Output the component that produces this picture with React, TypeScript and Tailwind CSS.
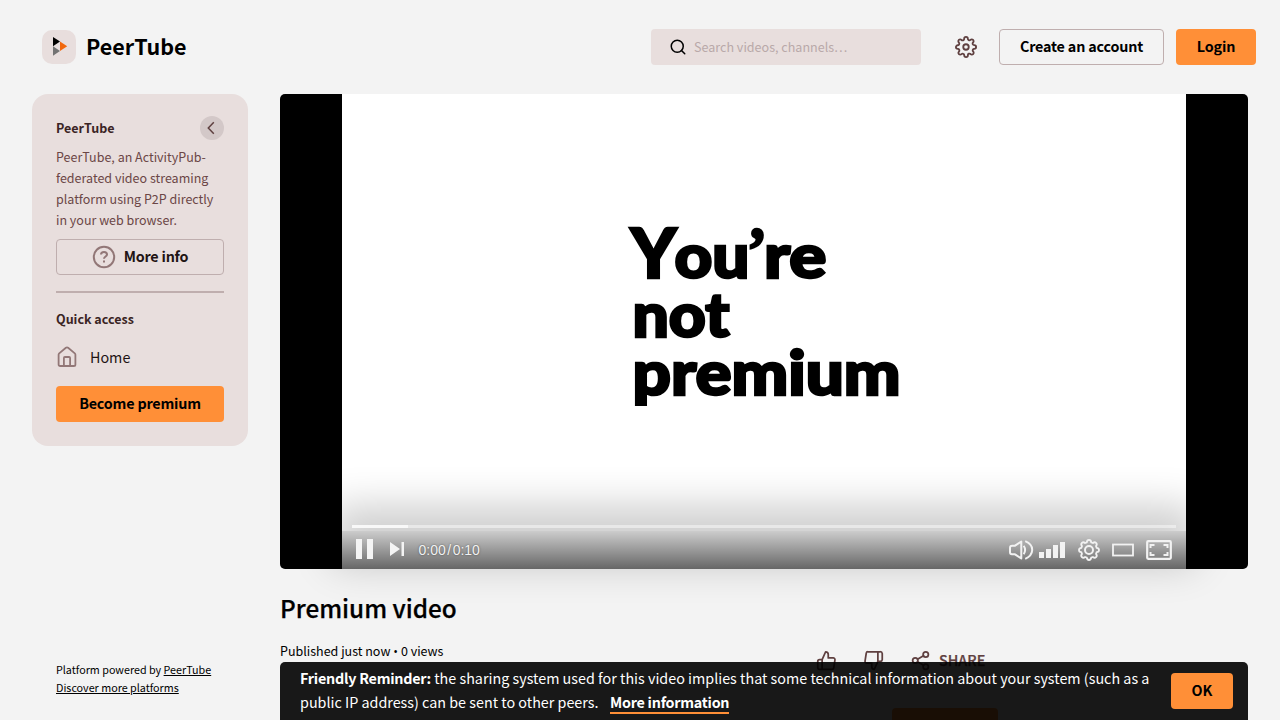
import React from "react";
import { FiSearch, FiSettings, FiShare2, FiThumbsDown, FiThumbsUp } from "react-icons/fi";

function Logo() {
  return (
    <span className="flex h-[34px] w-[34px] items-center justify-center rounded-[10px] bg-[#e8dedd]">
      <svg width="34" height="34" viewBox="0 0 34 34">
        <path d="M11 7v9.2l7-4.6z" fill="#000" />
        <path d="M11 16.2v9.6l7-4.9z" fill="#737373" />
        <path d="M18 11.6v9.4l7.2-4.7z" fill="#f1680d" />
      </svg>
    </span>
  );
}

function Header() {
  return (
    <header className="flex h-[94px] items-center pr-6 pl-[42px]">
      <Logo />
      <span className="ml-[10px] pb-[2px] text-[21.5px] leading-8 font-bold">PeerTube</span>
      <div className="ml-auto flex h-9 w-[270px] items-center rounded bg-[#e8dedd] pl-[18px]">
        <FiSearch size={18} strokeWidth={2} />
        <span className="ml-[7px] text-[12.55px] leading-5 text-[#b9a9a9]">Search videos, channels…</span>
      </div>
      <FiSettings className="ml-[34px] text-[#5f4040]" size={22} />
      <button className="ml-[22px] h-9 w-[165px] rounded border border-[#bfaeae] pb-[2px] text-[14.33px] font-bold tracking-[-0.17px]">
        Create an account
      </button>
      <button className="ml-3 h-9 w-20 rounded bg-[#ff8f37] pb-[2px] text-[14.33px] font-bold tracking-[-0.17px]">Login</button>
    </header>
  );
}

function Sidebar() {
  return (
    <aside className="flex h-[626px] w-[216px] shrink-0 flex-col">
      <div className="h-[352px] rounded-[16px] bg-[#e8dedd] px-6 pt-[22px] text-[#1f1414]">
        <div className="flex h-6 items-center justify-between">
          <span className="text-[12.5px] font-bold text-[#3a2424]">PeerTube</span>
          <span className="flex h-6 w-6 items-center justify-center rounded-full bg-[#d3c8c8]">
            <svg width="24" height="24" viewBox="0 0 24 24" fill="none" stroke="#5f4040" strokeWidth="1.5">
              <path d="M13.8 6.3 8.3 12l5.5 5.7" />
            </svg>
          </span>
        </div>
        <p className="h-[99px] pt-[6px] text-[12.5px] leading-[21px] whitespace-nowrap text-[#6b4646]">
          PeerTube, an ActivityPub-
          <br />
          federated video streaming
          <br />
          platform using P2P directly
          <br />
          in your web browser.
        </p>
        <button className="flex h-9 w-full items-center justify-center gap-2 rounded border border-[#bfaeae]">
          <svg width="24" height="24" viewBox="0 0 24 24" fill="none" stroke="#927777" strokeWidth="2">
            <circle cx="12" cy="12" r="10.2" />
            <path d="M9 9.5C9 6 15 6 15 9.5c0 2-3 2-3 4.3M12 15.5v2" />
          </svg>
          <span className="pb-[2px] text-[14.33px] font-bold tracking-[-0.2px]">More info</span>
        </button>
        <div className="mt-4 h-[2px] bg-[#bfaeae]" />
        <h2 className="mt-[14px] h-6 text-[12.5px] leading-6 font-bold text-[#3a2424]">Quick access</h2>
        <div className="mt-2 flex h-9 items-center">
          <svg width="22" height="22" viewBox="0 0 22 22" fill="none" stroke="#927777" strokeWidth="1.8" strokeLinejoin="round">
            <path d="M2.6 8.8Q2.6 8 3.2 7.4l6.7-5.6q1.1-.9 2.2 0l6.7 5.6q.6.6.6 1.4v9.6q0 1.6-1.6 1.6H4.2q-1.6 0-1.6-1.6z" />
            <path d="M7.9 20v-8q0-1 1-1h4.2q1 0 1 1v8" />
          </svg>
          <span className="ml-3 pb-[1px] text-[14.33px]">Home</span>
        </div>
        <button className="mt-[11px] h-9 w-full rounded bg-[#ff8f37] pb-[2px] text-[14.33px] font-bold tracking-[-0.19px] text-black">
          Become premium
        </button>
      </div>
      <footer className="mt-auto px-6 pb-[23px] text-[10.75px] leading-[18px] whitespace-nowrap">
        Platform powered by <a className="underline underline-offset-1">PeerTube</a>
        <br />
        <a className="underline underline-offset-1">Discover more platforms</a>
      </footer>
    </aside>
  );
}

function Frame() {
  const letters = [
    { s: "Y", x: 630.5, y: 278, w: 46, f: 68 },
    { s: "ou", x: 674.5, y: 278, w: 75, f: 60 },
    { s: "’", x: 747, y: 271, w: 20, f: 64, serif: true },
    { s: "re", x: 764, y: 278, w: 62.5, f: 60 },
    { s: "not", x: 632.5, y: 336.5, w: 97, f: 60 },
    { s: "premium", x: 632.5, y: 394.5, w: 268, f: 60 },
  ];
  return (
    <svg className="block" width="844" height="475" viewBox="342 94 844 475">
      <rect x="342" y="94" width="844" height="475" fill="#fff" />
      {letters.map((l) => (
        <text
          key={l.s}
          x={l.x}
          y={l.y}
          textLength={l.w}
          lengthAdjust="spacingAndGlyphs"
          fontFamily={l.serif ? "Liberation Serif, serif" : "Lato, sans-serif"}
          fontWeight="900"
          fontSize={l.f}
          stroke="#000"
          strokeWidth="2.5"
        >
          {l.s}
        </text>
      ))}
    </svg>
  );
}

function Controls() {
  return (
    <div className="absolute bottom-0 left-[62px] h-[38px] w-[844px] bg-linear-to-b from-black/20 to-black/60 shadow-[0_-15px_40px_10px_rgba(0,0,0,0.2)]">
      <div className="absolute -top-[6px] left-[10px] h-[3px] w-[824px] bg-white/45">
        <div className="h-full w-14 bg-[#f8f8f8]" />
      </div>
      <div className="flex h-full items-center text-[#f2f2f2]">
        <svg className="shrink-0" width="68" height="38" viewBox="0 0 68 38" fill="#f4f4f4">
          <path d="M14 8h6v20h-6zM25 8h6v20h-6zM48 11l10 7-10 7zM59.5 11H62v14h-2.5z" />
        </svg>
        <span className="ml-[8.5px] font-['Liberation_Sans',sans-serif] text-[14px] whitespace-pre [text-shadow:0_0_2px_rgba(0,0,0,.5)]">
          0:00<span className="px-[1.5px]">/</span>0:10
        </span>
        <svg className="ml-auto shrink-0" width="178" height="38" viewBox="1008 531 178 38" fill="none" stroke="#f2f2f2" strokeWidth="2">
          <path d="M1021.3 541.5v17l-6.3-4.2h-3q-2 0-2-2v-4.6q0-2 2-2h3zM1023.7 545.8q2.8 4.2 0 8.4M1025.2 541.2q7.2 3 7 8.8-.2 5.8-7 8.8" strokeLinejoin="round" />
          <path d="M1039 552h5v6h-5zM1046 549h5v9h-5zM1053 545h5v13h-5zM1060 542h5v16h-5z" fill="#f2f2f2" stroke="none" />
          <circle cx="1089" cy="550" r="4" />
          <path
            strokeWidth="1.8"
            strokeLinejoin="round"
            d="M1086.8 542.3q.2-2.3 2.2-2.3t2.2 2.3l1.7.7q1.8-1.5 3.2-.1t-.1 3.2l.7 1.7q2.3.2 2.3 2.2t-2.3 2.2l-.7 1.7q1.5 1.8.1 3.2t-3.2-.1l-1.7.7q-.2 2.3-2.2 2.3t-2.2-2.3l-1.7-.7q-1.8 1.5-3.2.1t.1-3.2l-.7-1.7q-2.3-.2-2.3-2.2t2.3-2.2l.7-1.7q-1.5-1.8-.1-3.2t3.2.1z"
          />
          <rect x="1113" y="544.5" width="20" height="11" strokeWidth="1.8" />
          <rect x="1147.2" y="541.2" width="23.6" height="17.6" rx="1" strokeWidth="2.2" />
          <path d="M1150.5 548v-3h4M1163.5 545h4v3M1167.5 552v3h-4M1154.5 555h-4v-3" strokeWidth="2" />
        </svg>
      </div>
    </div>
  );
}

function Player() {
  return (
    <div className="relative flex h-[475px] w-[968px] justify-center rounded-[5px] bg-black">
      <Frame />
      <Controls />
    </div>
  );
}

function Details() {
  return (
    <section>
      <h1 className="mt-5 h-10 text-[24.3px] leading-[37px] font-medium [-webkit-text-stroke:0.25px_#000]">Premium video</h1>
      <div className="flex h-[60px] items-start">
        <p className="mt-3 w-[536px] text-[12.5px] leading-5">
          Published just now<span className="inline-block w-[10.5px] text-center font-['Open_Sans',sans-serif]">•</span>0 views
        </p>
        <div className="mt-[20px] flex items-center text-[#5f4040]">
          <FiThumbsUp size={21} strokeWidth={2} />
          <FiThumbsDown className="ml-[26px]" size={21} strokeWidth={2} />
          <FiShare2 className="ml-[26px]" size={21} strokeWidth={2} />
          <span className="ml-2 text-[14.33px] leading-[22px] font-medium [-webkit-text-stroke:0.25px_#5f4040]">SHARE</span>
        </div>
      </div>
      <div className="mt-[19px] ml-[612px] h-9 w-[106px] rounded bg-[#ff8f37]" />
    </section>
  );
}

function Notice() {
  return (
    <div className="absolute bottom-0 left-[280px] flex h-[58px] w-[968px] rounded-t-[5px] bg-black/90 pr-[15px] pl-5 text-white">
      <p className="pt-[4px] text-[14.33px] leading-6 whitespace-nowrap">
        <b className="font-bold tracking-[-0.24px]">Friendly Reminder:</b> the sharing system used for this video implies that some technical information about your system (such as a
        <br />
        public IP address) can be sent to other peers.
        <a className="ml-[11.5px] inline-block h-[23px] border-b-2 border-[#ff8f37] leading-[22px] font-bold tracking-[-0.25px]">More information</a>
      </p>
      <button className="mt-[11px] ml-auto h-9 w-[62px] rounded bg-[#ff8f37] pb-[2px] text-[14.33px] font-bold text-black">OK</button>
    </div>
  );
}

export default function App() {
  return (
    <div className="relative h-[720px] w-[1280px] overflow-hidden bg-[#f3f3f3] font-['Noto_Sans_CJK_SC',sans-serif] text-black">
      <Header />
      <div className="flex gap-8 px-8">
        <Sidebar />
        <main className="min-w-0 flex-1">
          <Player />
          <Details />
        </main>
      </div>
      <Notice />
    </div>
  );
}
